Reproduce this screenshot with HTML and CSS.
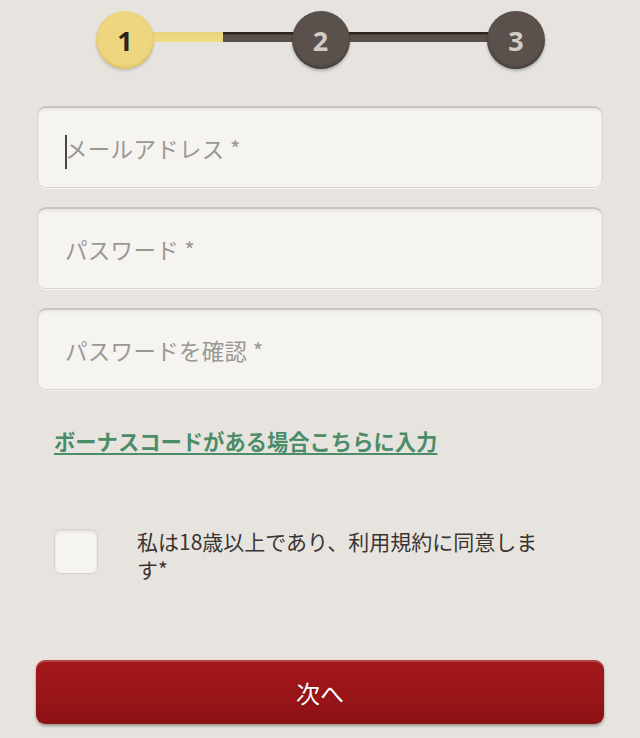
FILE: index.html
```html
<!DOCTYPE html>
<html lang="ja">
<head>
<meta charset="utf-8">
<title>登録</title>
<link rel="stylesheet" href="styles.css">
</head>
<body>
<div class="page">
  <div class="stepper">
    <div class="step active">1</div>
    <div class="line"><span class="fill"></span></div>
    <div class="step">2</div>
    <div class="line"></div>
    <div class="step">3</div>
  </div>

  <div class="fields">
    <div class="field"><span class="caret"></span><span class="ph">メールアドレス *</span></div>
    <div class="field"><span class="ph">パスワード *</span></div>
    <div class="field"><span class="ph">パスワードを確認 *</span></div>
  </div>

  <a class="bonus" href="#">ボーナスコードがある場合こちらに入力</a>

  <label class="agree">
    <span class="box"></span>
    <span class="agree-text">私は18歳以上であり、利用規約に同意します*</span>
  </label>

  <button class="next" type="button">次へ</button>
</div>
</body>
</html>
```

FILE: styles.css
```css
html, body {
  margin: 0;
  padding: 0;
}
body {
  background: #e7e4e0;
  font-family: "Noto Sans CJK JP", "Noto Sans", sans-serif;
  width: 640px;
  height: 738px;
  overflow: hidden;
}
.page {
  padding: 11px 36px 0 36px;
}
.stepper {
  display: flex;
  align-items: center;
  margin: 0 59px 0 60px;
}
.step {
  width: 58px;
  height: 58px;
  border-radius: 50%;
  background: #5b514c;
  color: #d2ccc7;
  display: flex;
  align-items: center;
  justify-content: center;
  font-family: "Open Sans", "Noto Sans", sans-serif;
  font-weight: 700;
  font-size: 27px;
  box-shadow: 0 2px 3px rgba(0,0,0,0.25), inset 0 -2px 3px rgba(0,0,0,0.25);
  flex: none;
  position: relative;
  z-index: 1;
}
.step.active {
  background: #eed67f;
  color: #2a2420;
  box-shadow: 0 2px 3px rgba(0,0,0,0.15), inset 0 -2px 3px rgba(160,130,40,0.25);
}
.line {
  flex: 1;
  height: 10px;
  margin: -6px -2px 0 -2px;
  background: linear-gradient(#2c2623 0, #2c2623 2px, #5a514c 3px, #5a514c 100%);
  position: relative;
}
.fill {
  display: block;
  width: 50%;
  height: 100%;
  background: linear-gradient(#e9d47a 0, #f1dd86 100%);
}
.fields {
  margin: 37px 1px 0 1px;
  display: flex;
  flex-direction: column;
  gap: 19px;
}
.field {
  height: 82px;
  box-sizing: border-box;
  background: #f6f4f1;
  border-radius: 9px;
  border: 1px solid #d9d5d0;
  border-top: 2px solid #c9c4be;
  box-shadow: inset 0 2px 3px rgba(0,0,0,0.06), 0 1px 0 rgba(255,255,255,0.6);
  display: flex;
  align-items: center;
  padding: 0 0 0 27px;
  position: relative;
}
.ph {
  font-size: 22.5px;
  color: #9b9894;
  letter-spacing: 0.3px;
}
.caret {
  position: absolute;
  left: 27px;
  top: 27px;
  width: 2px;
  height: 34px;
  background: #4a4643;
}
.bonus {
  display: inline-block;
  margin: 36px 0 0 18px;
  font-size: 21.3px;
  line-height: 30px;
  font-weight: 700;
  color: #4c8c68;
  text-decoration: underline;
  text-decoration-thickness: 2px;
  text-underline-offset: 3px;
}
.agree {
  display: flex;
  align-items: flex-start;
  margin: 73px 0 0 18px;
}
.box {
  flex: none;
  width: 44px;
  height: 45px;
  box-sizing: border-box;
  border-radius: 7px;
  background: #f6f4f1;
  border: 1px solid #d6d2cd;
  box-shadow: inset 0 2px 3px rgba(0,0,0,0.08);
}
.agree-text {
  margin: -2px 0 0 39px;
  width: 420px;
  font-size: 21px;
  line-height: 28px;
  color: #3a3532;
}
.next {
  display: block;
  width: 568px;
  height: 64px;
  margin: 77px 0 0 0;
  border: none;
  border-radius: 9px;
  background: linear-gradient(#a3181b 0, #9a1518 50%, #8d1215 100%);
  box-shadow: inset 0 2px 0 rgba(255,255,255,0.2), 0 2px 3px rgba(0,0,0,0.35);
  color: #ffffff;
  font-family: "Noto Sans CJK JP", "Noto Sans", sans-serif;
  font-size: 24px;
  padding: 0;
  text-shadow: 0 1px 1px rgba(0,0,0,0.3);
}
```
